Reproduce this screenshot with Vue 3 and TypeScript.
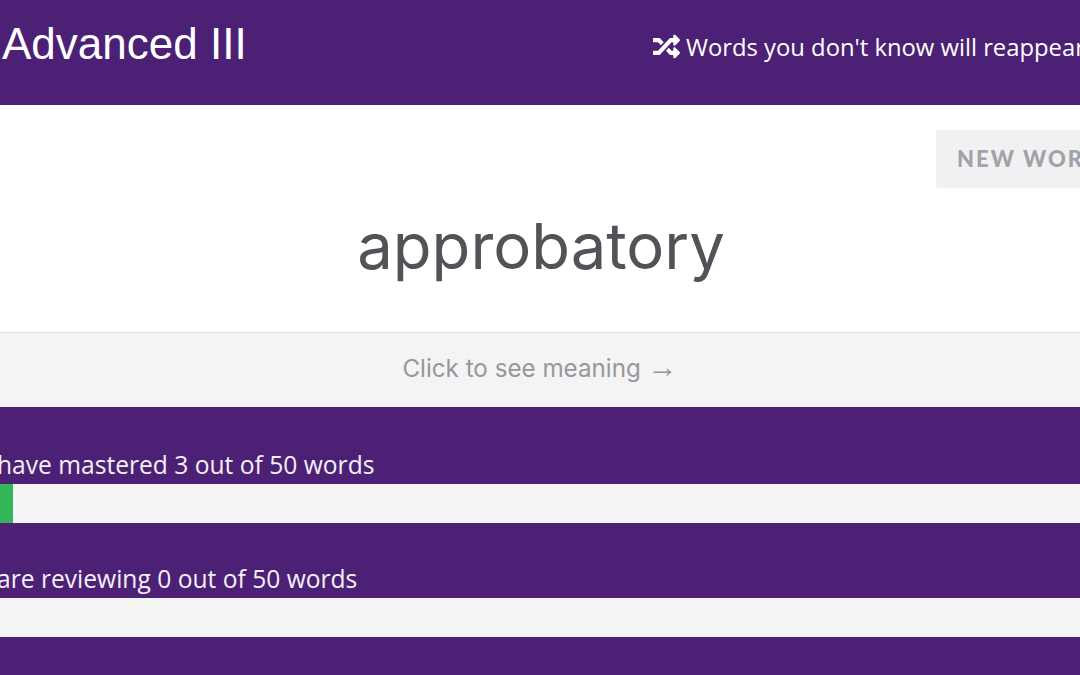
<script setup lang="ts">
const bars = [
  { label: 'You have mastered 3 out of 50 words', pct: 6.1 },
  { label: 'You are reviewing 0 out of 50 words', pct: 0 },
]
</script>

<template>
  <div class="viewport">
    <div class="page">
      <header class="head">
        <h1 class="title">Advanced III</h1>
        <div class="hint">
          <svg class="shuffle" viewBox="0 0 512 512" aria-hidden="true">
            <path fill="currentColor" d="M504.971 359.029c9.373 9.373 9.373 24.569 0 33.941l-80 79.984c-15.01 15.01-40.971 4.49-40.971-16.971V416h-58.785a12.004 12.004 0 0 1-8.773-3.812l-70.556-75.596 53.333-57.143L352 336h32v-39.981c0-21.438 25.943-31.998 40.971-16.971l80 79.981zM12 176h84l52.781 56.551 53.333-57.143-70.556-75.596A11.999 11.999 0 0 0 122.785 96H12c-6.627 0-12 5.373-12 12v56c0 6.627 5.373 12 12 12zm372 0v39.984c0 21.46 25.961 31.98 40.971 16.971l80-79.984c9.373-9.373 9.373-24.569 0-33.941l-80-79.981C409.943 24.021 384 34.582 384 56.019V96h-58.785a12.004 12.004 0 0 0-8.773 3.812L96 336H12c-6.627 0-12 5.373-12 12v56c0 6.627 5.373 12 12 12h110.785c3.326 0 6.503-1.381 8.773-3.812L352 176h32z" />
          </svg>
          <span>Words you don't know will reappear</span>
        </div>
      </header>

      <section class="card">
        <div class="card-top">
          <button class="new-word" type="button">NEW WORD</button>
        </div>
        <div class="word">approbatory</div>
      </section>

      <div class="reveal">Click to see meaning <span class="arrow">→</span></div>

      <section class="progress">
        <div v-for="bar in bars" :key="bar.label" class="row">
          <div class="label">{{ bar.label }}</div>
          <div class="track">
            <div class="fill" :style="{ width: bar.pct + '%' }"></div>
          </div>
        </div>
      </section>
    </div>
  </div>
</template>

<style>
html, body { margin: 0; background: #4c2175; }
</style>

<style scoped>
.viewport {
  width: 1080px;
  height: 675px;
  overflow: hidden;
  background: #4c2175;
}
.page {
  width: 1200px;
  margin-left: -60px;
  font-family: "Open Sans", Lato, sans-serif;
}
.head {
  height: 105px;
  box-sizing: border-box;
  background: #4c2175;
  color: #fff;
  display: flex;
  padding-left: 62px;
}
.title {
  width: 651px;
  margin: 20px 0 0;
  font: 400 44px/48px "Liberation Sans", Arial, sans-serif;
}
.hint {
  margin-top: 33px;
  display: flex;
  align-items: flex-start;
  gap: 6px;
  font-size: 23.8px;
  line-height: 28px;
  white-space: nowrap;
}
.shuffle {
  width: 27px;
  height: 27px;
}
.card {
  height: 228px;
  box-sizing: border-box;
  background: #fff;
  border-bottom: 1px solid #e2e2e4;
  padding-top: 25px;
}
.card-top {
  height: 58px;
  display: flex;
  justify-content: flex-end;
}
.new-word {
  width: 204px;
  height: 58px;
  border: 0;
  border-radius: 3px;
  background: #f1f1f4;
  color: #a2a2a7;
  font: 900 22px/58px Lato, sans-serif;
  letter-spacing: 2px;
  text-align: left;
  padding: 0 0 0 21px;
  white-space: nowrap;
}
.word {
  margin-top: 22px;
  padding-left: 2px;
  text-align: center;
  color: #525258;
  font: 400 63.4px/72px Inter, sans-serif;
}
.reveal {
  height: 74px;
  background: #f4f4f5;
  text-align: center;
  color: #97979c;
  font: 400 24.2px/72px Inter, sans-serif;
}
.arrow {
  font-family: "Liberation Sans", sans-serif;
  font-size: 30px;
  line-height: 0;
}
.progress {
  padding: 43px 0 0 7px;
}
.row { height: 114px; }
.label {
  color: #f5f0f8;
  font-size: 24.6px;
  line-height: 29px;
  height: 34px;
  white-space: nowrap;
}
.track {
  height: 39px;
  background: #f4f4f5;
  margin-left: -7px;
}
.fill {
  height: 100%;
  background: #34b55a;
}
</style>
